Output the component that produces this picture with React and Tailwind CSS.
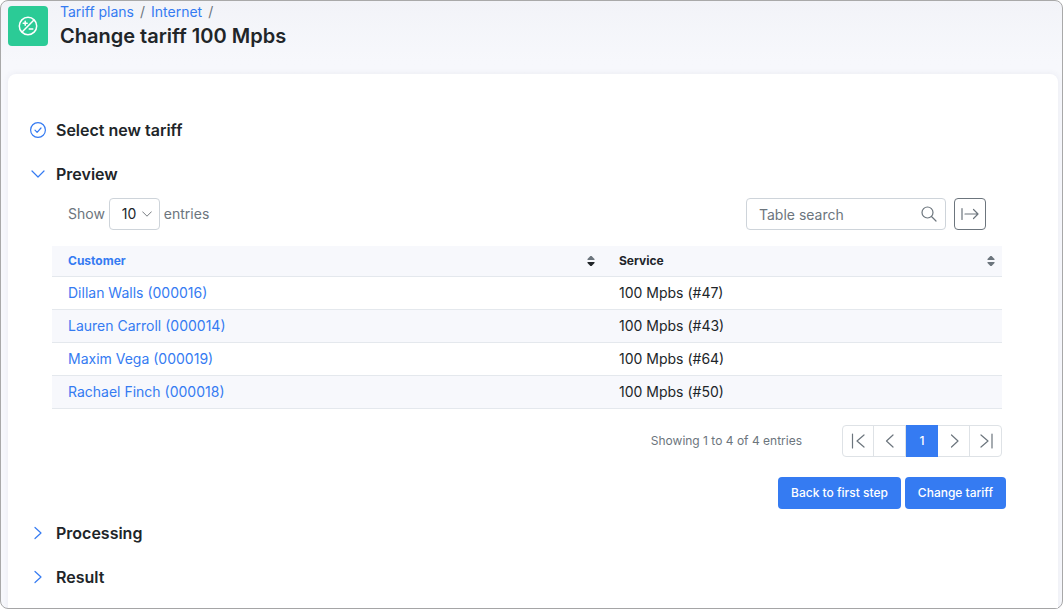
import React, { useState } from 'react';

const customers = [
  { id: '000016', name: 'Dillan Walls', service: '100 Mpbs (#47)' },
  { id: '000014', name: 'Lauren Carroll', service: '100 Mpbs (#43)' },
  { id: '000019', name: 'Maxim Vega', service: '100 Mpbs (#64)' },
  { id: '000018', name: 'Rachael Finch', service: '100 Mpbs (#50)' },
];

// Thin outline icon on a 16px grid
const Icon = ({ d, className = 'h-4 w-4' }) => (
  <svg className={className} viewBox="0 0 16 16" fill="none" stroke="currentColor" strokeWidth="1.2" strokeLinecap="round" strokeLinejoin="round" aria-hidden="true">
    <path d={d} />
  </svg>
);

const SortIcon = ({ active }) => (
  <svg className="h-[10px] w-2 shrink-0" viewBox="0 0 8 10" aria-hidden="true">
    <path d="M3.4 0h1.2L7.5 3v1h-7V3Z" fill="#6c757d" />
    <path d="M3.4 10h1.2L7.5 7V6h-7v1Z" fill={active ? '#212529' : '#6c757d'} />
  </svg>
);

const TariffIcon = () => (
  <svg className="h-5 w-5" viewBox="0 0 20 20" fill="none" stroke="currentColor" strokeWidth="1.5" strokeLinecap="round" aria-hidden="true">
    <circle cx="10" cy="10" r="8.7" />
    <path d="M4.3 15.7 15.7 4.3M5.2 7.2h4M7.2 5.2v4M11.2 13h3.6" />
  </svg>
);

const Step = ({ title, icon, children }) => (
  <section>
    <h2>
      <button type="button" className="flex h-11 items-center gap-[10px] text-base font-semibold">
        <span className="text-[#357bf2]">{icon}</span>
        {title}
      </button>
    </h2>
    {children}
  </section>
);

const ChevronRight = () => <Icon d="M5 2.5 11 8 5 13.5" />;

const pages = [
  { label: 'First page', d: 'M2.5 1v14M14 2 7 8l7 6' },
  { label: 'Previous page', d: 'M11 2 4.5 8l6.5 6' },
  { label: 'Page 1', text: '1' },
  { label: 'Next page', d: 'M5.5 2 12 8l-6.5 6' },
  { label: 'Last page', d: 'M14 1v14M3 2l7 6-7 6' },
];

const PreviewTable = () => {
  const [search, setSearch] = useState('');
  const [size, setSize] = useState('10');

  const rows = customers.filter((c) =>
    `${c.name} ${c.id} ${c.service}`.toLowerCase().includes(search.toLowerCase())
  );

  return (
    <div className="pt-[2px] pr-[34px] pl-[22px]">
      {/* Toolbar */}
      <div className="flex items-center justify-between px-4">
        <div className="flex items-center text-[#6c757d]">
          <label htmlFor="page-size">Show</label>
          <div className="relative mx-1">
            <select
              id="page-size"
              value={size}
              onChange={(e) => setSize(e.target.value)}
              className="block h-8 w-[51px] appearance-none rounded border border-[#ced4da] bg-white pl-3 text-[#212529]"
            >
              <option>10</option>
              <option>25</option>
              <option>50</option>
            </select>
            <Icon d="M1 4.5 8 11.5l7-7" className="pointer-events-none absolute top-[11px] right-2 h-[10px] w-[10px] text-[#495057]" />
          </div>
          <span>entries</span>
        </div>
        <div className="flex gap-2">
          <div className="relative">
            <input
              type="text"
              aria-label="Table search"
              placeholder="Table search"
              value={search}
              onChange={(e) => setSearch(e.target.value)}
              className="block h-8 w-[200px] rounded border border-[#ced4da] pr-8 pl-3 placeholder-[#6c757d]"
            />
            <Icon d="M12 6.5a5.5 5.5 0 1 1-11 0 5.5 5.5 0 0 1 11 0ZM10.5 10.5 15 15" className="pointer-events-none absolute top-2 right-[9px] h-4 w-4 text-[#6c757d]" />
          </div>
          <button type="button" aria-label="Export" className="flex h-8 w-8 items-center justify-center rounded border border-[#6c757d] text-[#6c757d]">
            <Icon d="M0 2.5v11M3 8h13M11.5 3.5 16 8l-4.5 4.5" className="h-4 w-4 overflow-visible" />
          </button>
        </div>
      </div>

      {/* Table */}
      <table className="mt-4 w-full table-fixed text-left">
        <thead>
          <tr className="h-[30px] border-b border-[#e4e8ed] bg-[#f7f8fc] text-xs">
            <th className="w-[58%] pr-2 pl-4 font-bold text-[#357bf2]">
              <div className="flex items-center justify-between">
                Customer
                <SortIcon active />
              </div>
            </th>
            <th className="pr-[7px] pl-4 font-bold">
              <div className="flex items-center justify-between">
                Service
                <SortIcon />
              </div>
            </th>
          </tr>
        </thead>
        <tbody>
          {rows.map((c) => (
            <tr key={c.id} className="h-[33px] border-b border-[#e4e8ed] even:bg-[#f7f8fc]">
              <td className="px-4">
                <a href="#" className="text-[#357bf2]">{c.name} ({c.id})</a>
              </td>
              <td className="px-4">{c.service}</td>
            </tr>
          ))}
        </tbody>
      </table>

      {/* Pagination */}
      <div className="mt-4 flex items-center justify-end gap-10">
        <p className="text-xs text-[#6c757d]">Showing 1 to {rows.length} of {rows.length} entries</p>
        <nav className="flex rounded border border-[#dee2e6]">
          {pages.map((p) => (
            <button
              key={p.label}
              type="button"
              aria-label={p.label}
              className={
                p.text
                  ? '-my-px flex h-8 w-8 items-center justify-center bg-[#357bf2] text-xs font-medium text-white'
                  : 'flex h-[30px] w-8 items-center justify-center border-r border-[#dee2e6] text-[#6c757d] first:w-[31px] last:w-[31px] last:border-r-0'
              }
            >
              {p.text || <Icon d={p.d} />}
            </button>
          ))}
        </nav>
      </div>
    </div>
  );
};

const App = () => {
  return (
    <div className="flex min-h-screen flex-col rounded-lg border border-[#a9a9a9] bg-linear-to-b from-[#f2f3f8] to-[#f7f8fc] to-10% pr-1 pl-[7px] font-['Inter',sans-serif] text-sm text-[#212529]">
      <header className="flex gap-3 pt-[5px]">
        <div className="flex h-10 w-10 items-center justify-center rounded bg-[#2bcb96] text-white">
          <TariffIcon />
        </div>
        <div className="-mt-1">
          <nav className="flex gap-[6px] leading-5 text-[#6c757d]">
            <a href="#" className="text-[#357bf2]">Tariff plans</a>
            <span>/</span>
            <a href="#" className="text-[#357bf2]">Internet</a>
            <span>/</span>
          </nav>
          <h1 className="text-xl font-semibold">Change tariff 100 Mpbs</h1>
        </div>
      </header>

      <main className="mt-6 flex-1 rounded-t-lg bg-white px-[22px] pt-[34px] pb-2 shadow-[0_0_6px_rgba(60,70,110,0.08)]">
        <Step
          title="Select new tariff"
          icon={<Icon d="M15.4 8A7.4 7.4 0 1 1 .6 8a7.4 7.4 0 0 1 14.8 0ZM5 8.2l2.1 2.1L11 6" />}
        />
        <Step title="Preview" icon={<Icon d="M2 5 8 11 14 5" />}>
          <PreviewTable />
          <div className="mt-5 mb-[2px] flex justify-end gap-1 pr-[30px]">
            <button type="button" className="h-8 rounded bg-[#357bf2] px-[13px] text-xs font-medium text-white">Back to first step</button>
            <button type="button" className="h-8 rounded bg-[#357bf2] px-[13px] text-xs font-medium text-white">Change tariff</button>
          </div>
        </Step>
        <Step title="Processing" icon={<ChevronRight />} />
        <Step title="Result" icon={<ChevronRight />} />
      </main>
    </div>
  );
};

export default App;
